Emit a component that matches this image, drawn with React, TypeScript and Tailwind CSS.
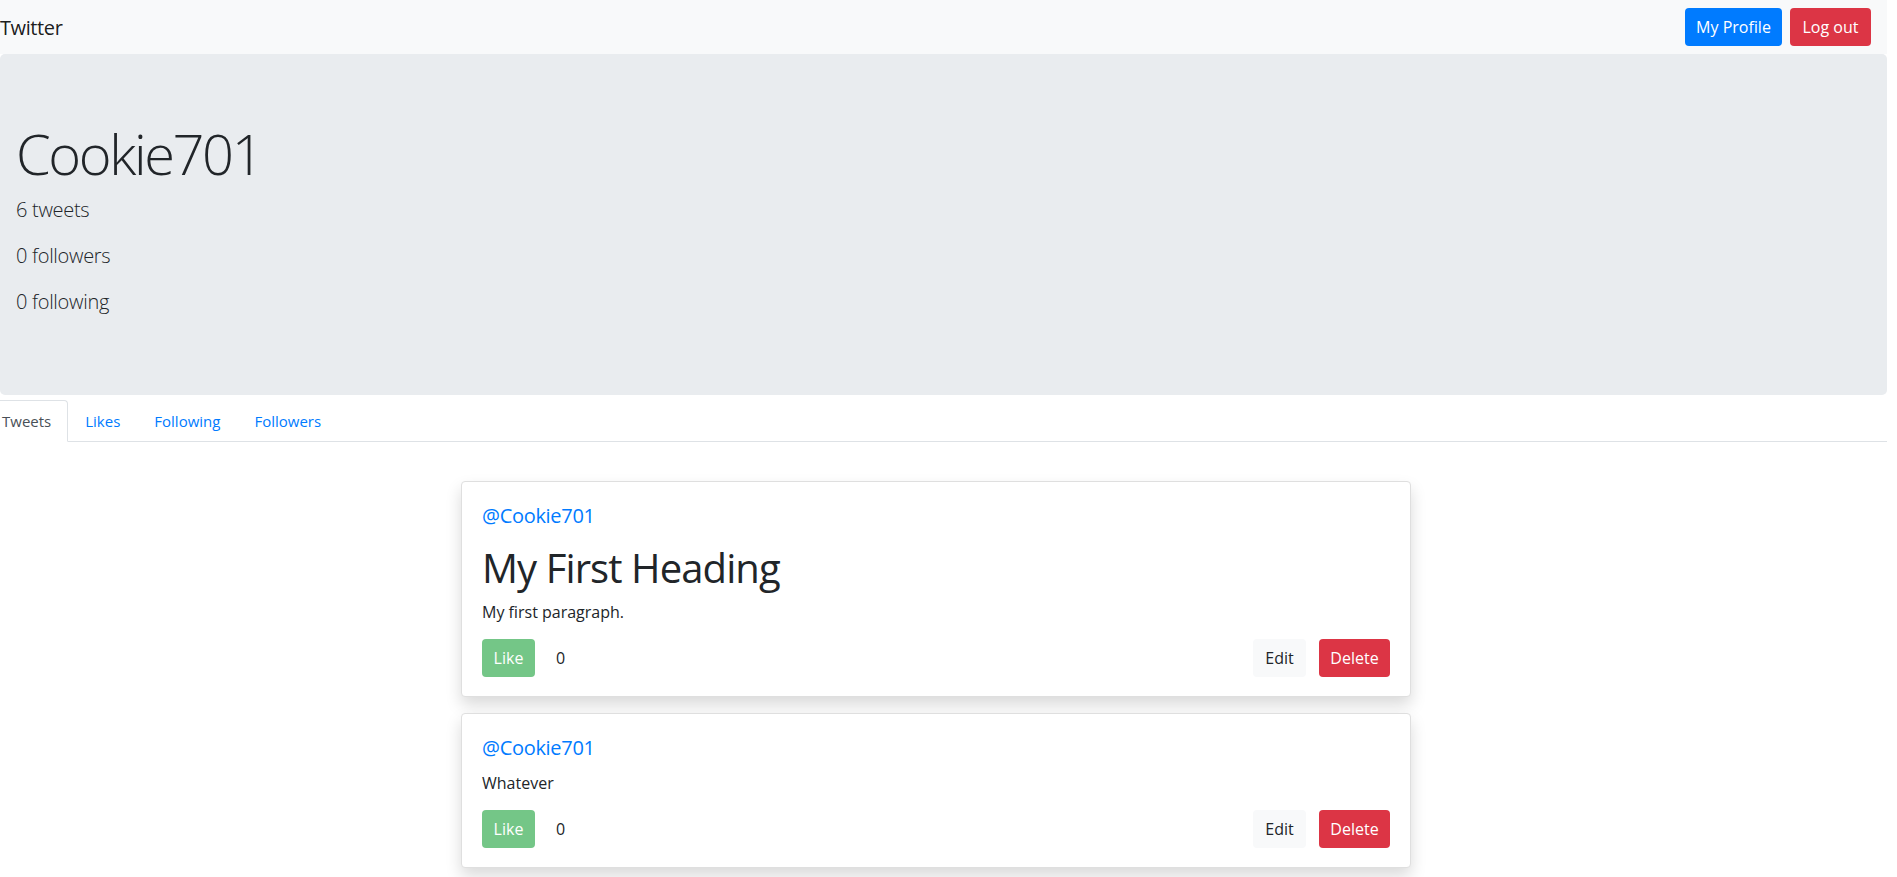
import React from 'react';

type Tweet = {
  id: number;
  handle: string;
  heading?: string;
  body: string;
};

const tweets: Tweet[] = [
  { id: 1, handle: '@Cookie701', heading: 'My First Heading', body: 'My first paragraph.' },
  { id: 2, handle: '@Cookie701', body: 'Whatever' },
];

const tabs = ['Tweets', 'Likes', 'Following', 'Followers'];

function TweetCard({ tweet }: { tweet: Tweet }) {
  return (
    <div className="mb-4 rounded border border-[#dfdfdf] bg-white px-5 pt-[22px] pb-[19px] shadow-[0_8px_16px_rgba(0,0,0,0.15)]">
      <a className="block text-[20px] leading-[24px] tracking-[-0.3px] text-[#007bff]">{tweet.handle}</a>
      {tweet.heading ? (
        <>
          <h1 className="mt-4 mb-2 text-[40px] leading-[48px] font-normal tracking-[-0.9px]">{tweet.heading}</h1>
          <p className="text-base leading-6">{tweet.body}</p>
        </>
      ) : (
        <p className="mt-[11px] text-base leading-6">{tweet.body}</p>
      )}
      <div className="mt-[15px] flex items-center">
        <button
          type="button"
          disabled
          className="h-[38px] w-[53px] rounded bg-[#74c687] text-base text-white"
        >
          Like
        </button>
        <span className="ml-[21px] text-base leading-6">0</span>
        <div className="ml-auto flex items-center gap-[13px]">
          <button type="button" className="h-[38px] w-[53px] rounded bg-[#f8f9fa] text-base text-[#212529]">
            Edit
          </button>
          <button type="button" className="h-[38px] w-[71px] rounded bg-[#dc3545] text-base text-white">
            Delete
          </button>
        </div>
      </div>
    </div>
  );
}

export default function App() {
  return (
    <div className="min-h-screen w-full bg-white font-['Open_Sans',sans-serif] text-[#212529]">
      <div className="w-[1887px]">
        <nav className="flex h-[54px] items-center justify-between bg-[#f8f9fa] pr-4">
          <span className="pt-[2px] text-[20px] leading-[30px] tracking-[-0.4px] text-black/90">Twitter</span>
          <div className="flex items-center gap-2">
            <button type="button" className="h-[38px] w-[97px] rounded bg-[#007bff] text-base text-white">
              My Profile
            </button>
            <button type="button" className="h-[38px] w-[81px] rounded bg-[#dc3545] text-base text-white">
              Log out
            </button>
          </div>
        </nav>

        <section className="rounded-[5px] bg-[#e9ecef] px-4 pt-[66px] pb-[62px]">
          <h1 className="mb-2 text-[56px] leading-[67px] font-light tracking-[-2.4px]">Cookie701</h1>
          <p className="mb-4 text-[20px] leading-[30px] font-light tracking-[-0.3px]">6 tweets</p>
          <p className="mb-4 text-[20px] leading-[30px] font-light tracking-[-0.3px]">0 followers</p>
          <p className="mb-4 text-[20px] leading-[30px] font-light tracking-[-0.3px]">0 following</p>
        </section>

        <ul className="mt-[5px] flex border-b border-[#dee2e6]">
          {tabs.map((tab, i) => (
            <li key={tab} className={i === 0 ? '-ml-[15px] -mb-px' : '-mb-px'}>
              <a
                className={
                  i === 0
                    ? 'block rounded-t border border-[#dee2e6] border-b-white bg-white px-4 py-2 text-[15px] leading-6 text-[#495057]'
                    : 'block border border-transparent px-4 py-2 text-[15px] leading-6 text-[#007bff]'
                }
              >
                {tab}
              </a>
            </li>
          ))}
        </ul>

        <div className="ml-[461px] mt-[39px] w-[950px]">
          {tweets.map((t) => (
            <TweetCard key={t.id} tweet={t} />
          ))}
        </div>
      </div>
    </div>
  );
}
